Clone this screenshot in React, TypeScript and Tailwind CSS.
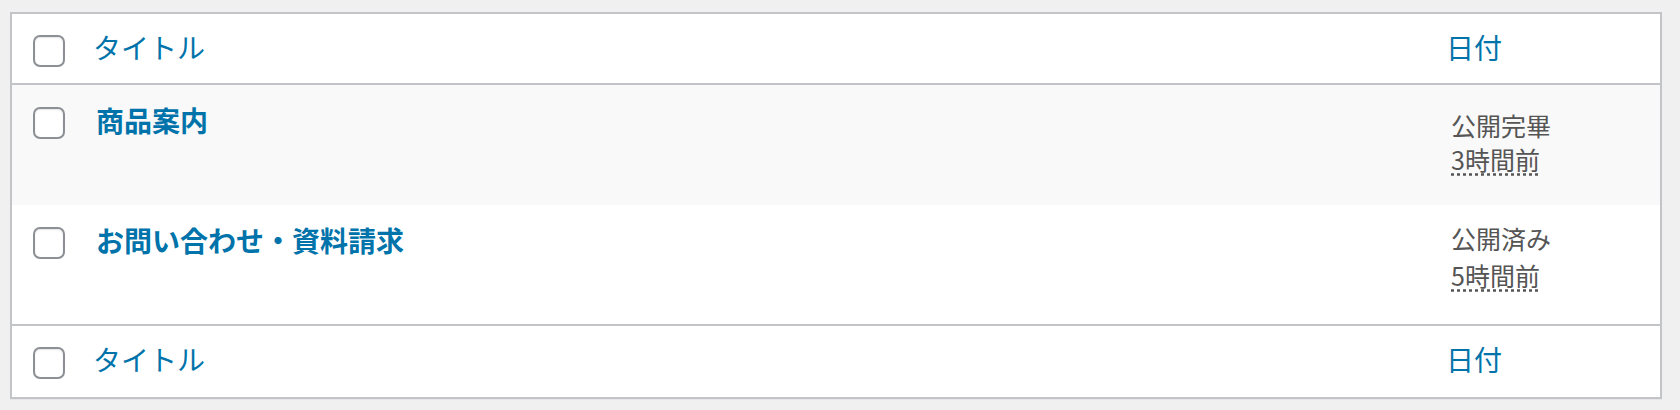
import React from "react";

const font = { fontFamily: '"Noto Sans CJK JP", "Noto Sans", sans-serif' };

function Box() {
  return (
    <div className="w-[32px] h-[32px] shrink-0 rounded-[7px] border-2 border-[#8c8f94] bg-white shadow-[inset_0_1px_2px_rgba(0,0,0,0.1)]" />
  );
}

function HeadRow({ border }: { border: "b" | "t" }) {
  return (
    <div
      className={`flex h-[71px] items-start bg-white ${border === "b" ? "border-b-2 border-[#c3c4c7]" : ""}`}
    >
      <div className="w-[81px] pl-[21px] pt-[21px]">
        <Box />
      </div>
      <div className="flex-1 pt-[13px] text-[28px] leading-[40px] text-[#0073aa]">タイトル</div>
      <div className="w-[214px] pt-[13px] text-[28px] leading-[40px] text-[#0073aa]">日付</div>
    </div>
  );
}

function Row({
  title,
  status,
  ago,
  bg,
  h,
  dateTop,
  lh,
}: {
  title: string;
  status: string;
  ago: string;
  bg: string;
  h: string;
  dateTop: string;
  lh: string;
}) {
  return (
    <div className={`flex items-start ${bg} ${h}`}>
      <div className="w-[84px] pl-[21px] pt-[22px]">
        <Box />
      </div>
      <div className="flex-1 pt-[15px] text-[28px] leading-[40px] font-bold text-[#0073aa]">{title}</div>
      <div className={`w-[211px] pl-[2px] text-[25px] text-[#555555] ${dateTop} ${lh}`}>
        <div>{status}</div>
        <div>
          <span className="underline decoration-dotted decoration-[#555555] underline-offset-[3px]">{ago}</span>
        </div>
      </div>
    </div>
  );
}

export default function App() {
  return (
    <div className="w-[1680px] h-[410px] bg-[#f0f0f1] pt-[12px] pl-[10px]" style={font}>
      <div className="w-[1652px] border-2 border-[#c3c4c7] bg-white shadow-[0_1px_1px_rgba(0,0,0,0.04)]">
        <HeadRow border="b" />
        <Row
          title="商品案内"
          status="公開完畢"
          ago="3時間前"
          bg="bg-[#f9f9f9]"
          h="h-[120px]"
          dateTop="pt-[23px]"
          lh="leading-[34px]"
        />
        <div className="border-b-2 border-[#c3c4c7]">
          <Row
            title="お問い合わせ・資料請求"
            status="公開済み"
            ago="5時間前"
            bg="bg-white"
            h="h-[119px]"
            dateTop="pt-[15px]"
            lh="leading-[37px]"
          />
        </div>
        <HeadRow border="t" />
      </div>
    </div>
  );
}
